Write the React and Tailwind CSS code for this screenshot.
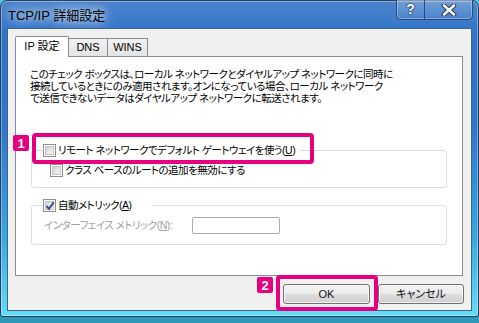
import React from 'react';

const jp = "font-['Liberation_Sans','Noto_Sans_CJK_JP',sans-serif] [font-feature-settings:'palt']";

function Checkbox({ checked }) {
  return (
    <span className="relative w-[13px] h-[13px] border border-[#8e8f8f] bg-white flex items-center justify-center shrink-0">
      <span className="w-[9px] h-[9px] border border-[#c4c4c4] bg-gradient-to-br from-[#d2d2d2] to-[#f7f7f7]" />
      {checked && (
        <svg className="absolute left-[1px] top-[1px]" width="10" height="10" viewBox="0 0 10 10">
          <path d="M1.5 5 L4 7.8 L8.8 1.2" fill="none" stroke="#3b4f8f" strokeWidth="2" />
        </svg>
      )}
    </span>
  );
}

function Button({ children, w }) {
  return (
    <button className={`${w} h-[20px] rounded-[3px] border border-[#707070] bg-[linear-gradient(to_bottom,#f3f3f3_0%,#ebebeb_48%,#dddddd_52%,#cfcfcf_100%)] shadow-[inset_0_0_0_1px_rgba(255,255,255,0.7)] text-[11px] font-normal text-[#111] flex items-center justify-center ${jp}`}>
      {children}
    </button>
  );
}

function Badge({ n, className }) {
  return (
    <div className={`absolute w-[16px] h-[16px] rounded-[2px] bg-[#e4007f] text-white text-[13px] font-bold leading-none flex items-center justify-center font-['Liberation_Sans',sans-serif] ${className}`}>
      {n}
    </div>
  );
}

export default function App() {
  return (
    <div className="relative w-[479px] h-[323px] overflow-hidden bg-[linear-gradient(to_bottom,#4fc3de,#2f98b8)]">
      {/* window frame */}
      <div className="w-[479px] h-[317px] rounded-t-[7px] rounded-b-[3px] border border-[#263f5f] bg-[linear-gradient(to_bottom,#4a84cc_0%,#2f72c9_12%,#2f76cc_40%,#3aa6e2_75%,#66dcf8_100%)] shadow-[inset_0_0_0_1px_rgba(255,255,255,0.35)] flex flex-col">
        {/* title bar */}
        <div className="h-[27px] flex items-start justify-between shrink-0">
          <div className={`pl-[7px] pt-[5px] text-[13px] text-black [text-shadow:0_0_8px_#ffffff,0_0_14px_rgba(255,255,255,0.8)] ${jp}`}>
            TCP/IP 詳細設定
          </div>
          <div className="flex h-[20px] -mt-px mr-[5px] rounded-b-[5px] border border-t-0 border-[#2a4a76] overflow-hidden shadow-[inset_0_0_0_1px_rgba(255,255,255,0.3)] bg-[linear-gradient(to_bottom,rgba(255,255,255,0.22),rgba(255,255,255,0.06))]">
            <div className="w-[28px] h-full flex items-center justify-center border-r border-[#2a4a76] font-['Liberation_Sans',sans-serif] font-bold text-[14px] text-white [text-shadow:0_0_1px_#1d2f4a,0_0_1px_#1d2f4a,0_0_2px_#1d2f4a]">
              ?
            </div>
            <div className="w-[47px] h-full flex items-center justify-center">
              <svg width="16" height="12" viewBox="0 0 16 12">
                <path d="M3 1.5 L13 10.5 M13 1.5 L3 10.5" stroke="#23344f" strokeWidth="4.6" strokeLinecap="round" />
                <path d="M3 1.5 L13 10.5 M13 1.5 L3 10.5" stroke="#ffffff" strokeWidth="2.6" strokeLinecap="round" />
              </svg>
            </div>
          </div>
        </div>

        {/* client area */}
        <div className="flex-1 ml-[6px] mr-[6px] mb-[5px] border border-[#3f6783] bg-[#f0f0f0] pl-[7px] pr-[8px] pt-[7px] flex flex-col">
          {/* tabs */}
          <div className={`flex items-end h-[20px] text-[11px] text-black ${jp}`}>
            <div className="relative z-10 w-[54px] h-[21px] -mb-px border border-b-0 border-[#898c95] bg-white rounded-t-[2px] flex items-center justify-center pb-[2px]">
              IP 設定
            </div>
            <div className="w-[39px] h-[18px] border border-l-0 border-b-0 border-[#898c95] bg-[linear-gradient(to_bottom,#f2f2f2,#e3e3e3)] flex items-center justify-center">
              DNS
            </div>
            <div className="w-[40px] h-[18px] border border-l-0 border-b-0 border-[#898c95] bg-[linear-gradient(to_bottom,#f2f2f2,#e3e3e3)] flex items-center justify-center">
              WINS
            </div>
          </div>

          {/* panel */}
          <div className={`h-[220px] border border-[#898c95] bg-white pl-[14px] pr-[15px] pt-[11px] text-[10.5px] tracking-[-0.5px] text-black ${jp}`}>
            <p className="leading-[12px]">
              このチェック ボックスは、ローカル ネットワークとダイヤルアップ ネットワークに同時に
              <br />
              接続しているときにのみ適用されます。オンになっている場合、ローカル ネットワーク
              <br />
              で送信できないデータはダイヤルアップ ネットワークに転送されます。
            </p>

            <fieldset className="mt-[40px] ml-px border border-[#d5dfe5] rounded-[3px] pl-[11px] pb-[10px]">
              <legend className="flex items-center gap-[2px] pr-[4px] h-[13px] leading-[13px]">
                <Checkbox />
                <span>
                  リモート ネットワークでデフォルト ゲートウェイを使う(<span className="underline">U</span>)
                </span>
              </legend>
              <div className="mt-[7px] ml-[7px] flex items-center gap-[2px] h-[13px]">
                <Checkbox />
                <span>クラス ベースのルートの追加を無効にする</span>
              </div>
            </fieldset>

            <fieldset className="mt-[11px] ml-px border border-[#d5dfe5] rounded-[3px] pl-[11px] pb-[10px]">
              <legend className="flex items-center gap-[2px] pr-[20px] h-[13px] leading-[13px]">
                <Checkbox checked />
                <span>
                  自動メトリック(<span className="underline">A</span>)
                </span>
              </legend>
              <div className="mt-[5px] ml-px flex items-center">
                <span className="w-[148px] text-[#a0a0a0]">
                  インターフェイス メトリック(<span className="underline">N</span>):
                </span>
                <div className="w-[88px] h-[17px] border border-[#adadad] rounded-[2px] bg-white" />
              </div>
            </fieldset>
          </div>

          {/* buttons */}
          <div className="mt-[8px] -mr-px flex justify-end gap-[8px]">
            <Button w="w-[87px]">OK</Button>
            <Button w="w-[86px]">キャンセル</Button>
          </div>
        </div>
      </div>

      {/* annotations */}
      <Badge n="1" className="left-[13px] top-[135px]" />
      <div className="absolute left-[32px] top-[133px] w-[282px] h-[31px] border-[4px] border-[#e4007f] rounded-[4px]" />
      <Badge n="2" className="left-[257px] top-[277px]" />
      <div className="absolute left-[276px] top-[275px] w-[102px] h-[36px] border-[4px] border-[#e4007f] rounded-[4px]" />
    </div>
  );
}
